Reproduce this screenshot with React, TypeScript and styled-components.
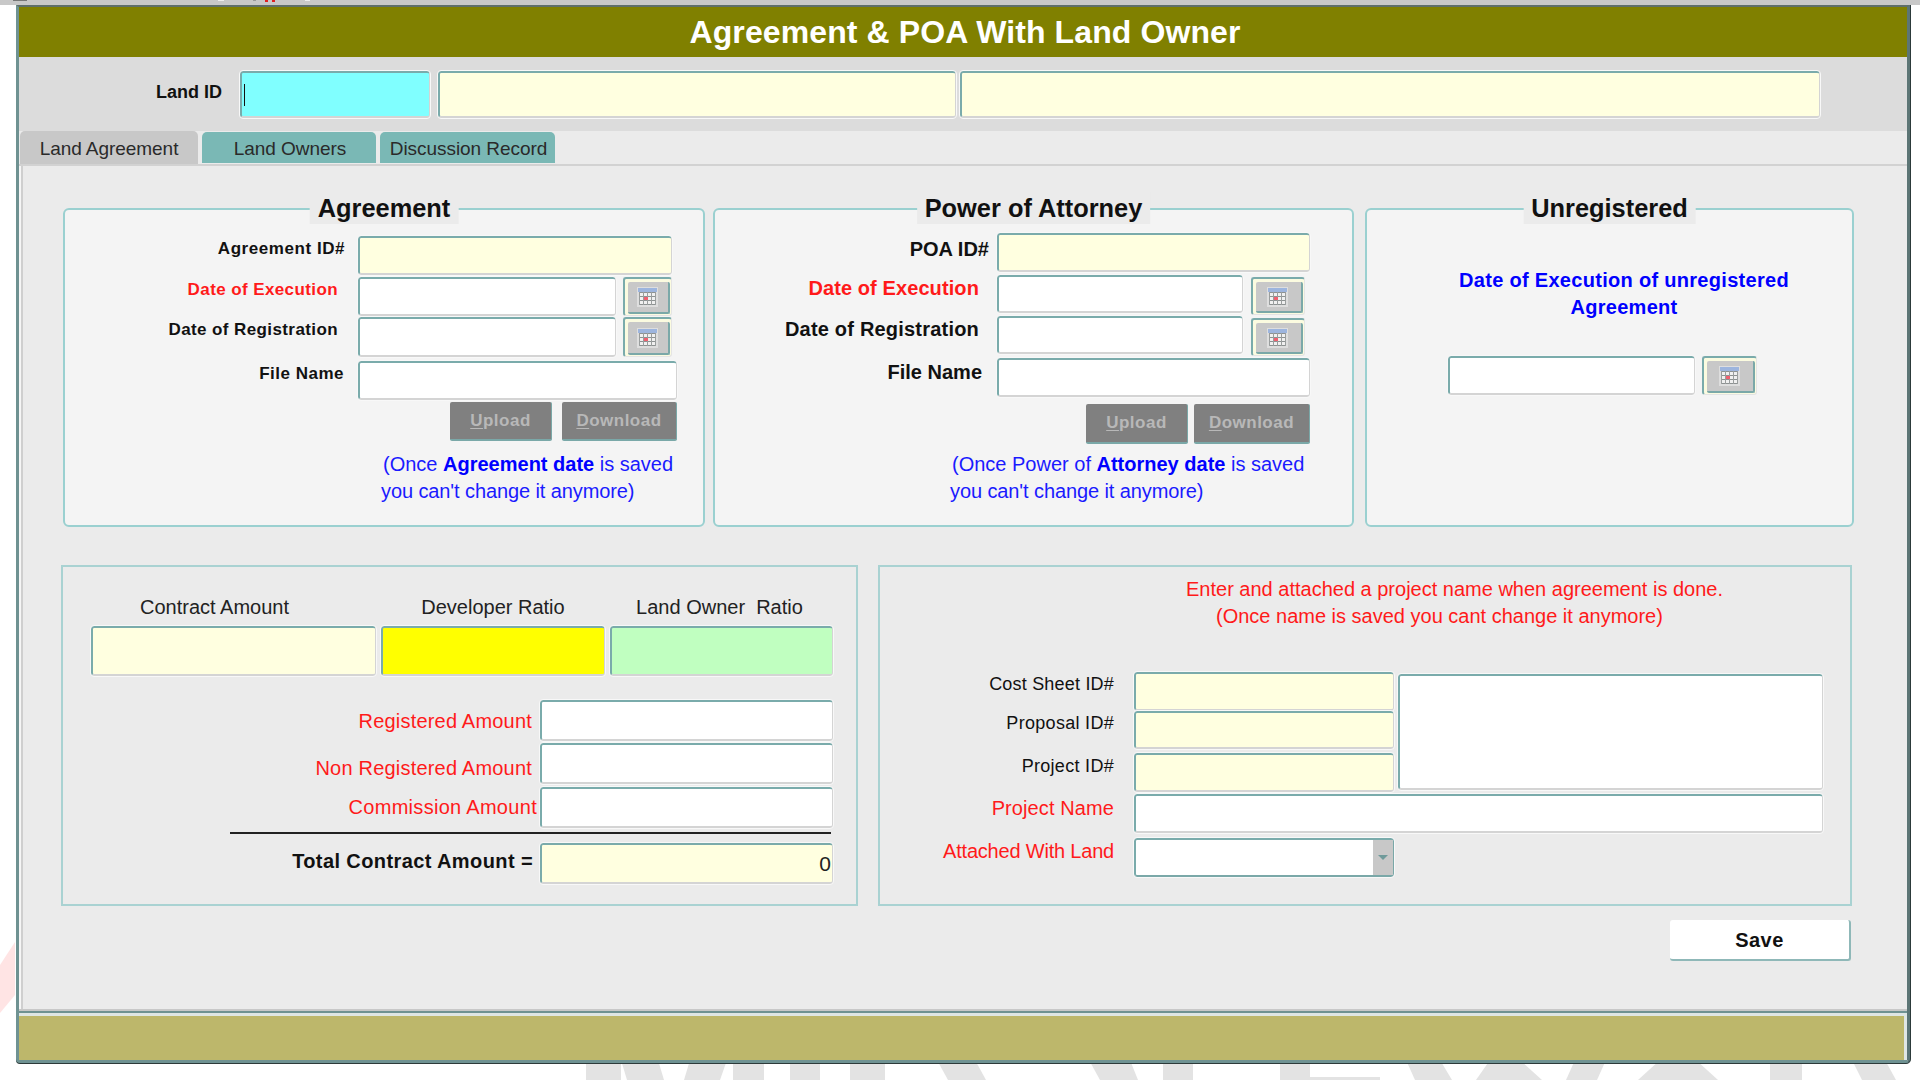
import React from "react";
import styled, { createGlobalStyle } from "styled-components";

const Global = createGlobalStyle`
  html, body { margin: 0; padding: 0; background: #fff; }
  body { width: 1920px; height: 1080px; overflow: hidden; font-family: "Liberation Sans", Arial, sans-serif; color: #111; }
  * { box-sizing: border-box; }
`;

const Page = styled.div`position: relative; width: 1920px; height: 1080px; overflow: hidden;`;
const Backdrop = styled.svg`position: absolute; left: 0; top: 0; width: 1920px; height: 1080px;`;
const TopStrip = styled.svg`position: relative; display: block; width: 1920px; height: 5px; background: #c8c8c8;`;

const Win = styled.div`
  position: relative; display: flex; flex-direction: column;
  margin-left: 16px; width: 1894px; height: 1058px;
  border-top: 2px solid #5f6f6a; border-left: 3px solid #6f9292; border-right: 3px solid #5c7575;
  border-bottom: 3px solid #6f9292; border-bottom-left-radius: 4px; border-bottom-right-radius: 4px;
  box-shadow: 0 1px 0 #2c3a3a, 1px 0 0 #2c3a3a; background: #ebebeb;
`;
const TitleBar = styled.div`
  height: 50px; line-height: 50px; padding-left: 4px; background: #808000; color: #fff; text-align: center;
  font-size: 32px; font-weight: 700; letter-spacing: 0.1px;
`;
const LandBar = styled.div`display: flex; align-items: flex-start; gap: 8px; height: 74px; padding-top: 14px; background: #dcdcdc;`;
const LandLabel = styled.div`width: 213px; padding: 9px 10px 0 0; text-align: right; font-size: 18px; line-height: 24px; font-weight: 700;`;
const TabBar = styled.div`display: flex; align-items: flex-start; gap: 4px; height: 35px; padding-left: 1px; border-bottom: 2px solid #d2d2d2; background: #ebebeb;`;
const Tab = styled.div<{ $active?: boolean; $w: number; $pl?: number }>`
  width: ${(p) => p.$w}px; height: ${(p) => (p.$active ? 33 : 31)}px; margin-top: ${(p) => (p.$active ? 0 : 1)}px;
  padding-left: ${(p) => p.$pl ?? 0}px;
  line-height: ${(p) => (p.$active ? 35 : 33)}px; text-align: center; font-size: 19px; color: #2a2a2a; letter-spacing: -0.05px;
  background: ${(p) => (p.$active ? "#c8c8c8" : "#7ab8b5")}; border-radius: 5px 5px 0 0;
`;

const Content = styled.div`
  flex: 1; padding: 42px 0 0 40px; background: #ebebeb;
  border-left: 2px solid #f6f6f6; box-shadow: inset 2px 0 0 #cfcfcf;
`;
const TopRow = styled.div`display: grid; grid-template-columns: 642px 641px 492px; column-gap: 8px; height: 319px; margin-left: 2px;`;
const Panel = styled.div<{ $inset?: number }>`
  position: relative; height: 319px; margin-left: ${(p) => p.$inset ?? 0}px;
  background: #f4f4f4; border: 2px solid #9ad0d0; border-radius: 6px;
`;
const PanelTitle = styled.div`
  position: absolute; top: -18px; left: 50%; transform: translateX(-50%); height: 32px; padding: 0 8px;
  background: #ebebeb; font-size: 25.4px; line-height: 32px; font-weight: 700; white-space: nowrap;
`;
const Row = styled.div<{ $top: number; $indent?: number }>`
  display: flex; align-items: flex-start; margin-top: ${(p) => p.$top}px; margin-left: ${(p) => p.$indent ?? 0}px;
`;
const Label = styled.div<{ $w: number; $pr: number; $pt?: number; $size?: number; $red?: boolean; $bold?: boolean; $sp?: number }>`
  width: ${(p) => p.$w}px; flex: none; padding-right: ${(p) => p.$pr}px; padding-top: ${(p) => p.$pt ?? 0}px;
  text-align: right; line-height: 24px; white-space: nowrap;
  font-size: ${(p) => p.$size ?? 20}px; font-weight: ${(p) => (p.$bold ? 700 : 400)};
  letter-spacing: ${(p) => p.$sp ?? 0}px; color: ${(p) => (p.$red ? "#ff1a1a" : "#111")};
`;
const Field = styled.div<{ $w: number; $h: number; $bg?: string; $nudge?: number }>`
  width: ${(p) => p.$w}px; height: ${(p) => p.$h}px; flex: none; background: ${(p) => p.$bg ?? "#fff"};
  margin-left: ${(p) => p.$nudge ?? 0}px;
  border-style: solid; border-width: 2px 1px 2px 2px; border-color: #7aabab #d4d4d4 #d4d4d4 #7aabab; border-radius: 3px;
  outline: 1px solid #f8f8f8; outline-offset: 0;
`;
const Caret = styled.div`width: 1px; height: 22px; margin: 11px 0 0 2px; background: #111;`;
const Amount = styled.div`text-align: right; padding-right: 1px; font-size: 21px; line-height: 38px; color: #222;`;
const CalOuter = styled.div<{ $w: number; $h: number; $left: number; $top?: number }>`
  width: ${(p) => p.$w}px; height: ${(p) => p.$h}px; flex: none; margin: ${(p) => p.$top ?? 0}px 0 0 ${(p) => p.$left}px;
  display: flex; padding: 3px 1px 1px 3px; background: #fbfbe0;
  border-style: solid; border-width: 2px 1px 1px 2px; border-color: #7aabab #e4e4e4 #e4e4e4 #7aabab; border-radius: 3px;
`;
const CalInner = styled.div`
  flex: 1; display: flex; align-items: center; justify-content: center; padding-right: 2px; background: #c8c8c8;
  border-right: 2px solid #7aa8a8; border-bottom: 2px solid #7aa8a8; border-radius: 2px;
`;
const Buttons = styled.div<{ $left: number; $gap: number; $top: number }>`
  display: flex; gap: ${(p) => p.$gap}px; margin: ${(p) => p.$top}px 0 0 ${(p) => p.$left}px;
`;
const GreyButton = styled.div<{ $w: number; $h: number }>`
  width: ${(p) => p.$w}px; height: ${(p) => p.$h}px; line-height: ${(p) => p.$h - 2}px; text-align: center;
  background: #808080; color: #b8b8b8; font-size: 17px; font-weight: 700; letter-spacing: 0.5px;
  border-right: 1px solid #7aa8a8; border-bottom: 2px solid #7aa8a8; border-radius: 2px;
  u { text-underline-offset: 2px; }
`;
const Note = styled.div<{ $left: number; $top: number }>`
  margin: ${(p) => p.$top}px 0 0 ${(p) => p.$left}px; font-size: 20px; line-height: 27px; color: #1a1aff; white-space: nowrap;
  b { color: #0000ff; }
`;
const NoteTail = styled.div`margin-left: -2px; letter-spacing: -0.1px;`;
const BlueHead = styled.div`
  margin-top: 57px; padding-left: 29px; text-align: center; font-size: 20px; line-height: 27px; font-weight: 700; color: #0000ff; letter-spacing: 0.3px;
`;

const BottomRow = styled.div`display: grid; grid-template-columns: 797px 974px; column-gap: 20px; height: 341px; margin-top: 38px;`;
const FlatPanel = styled.div`background: #ebebeb; border: 2px solid #a9d2d2; height: 341px;`;
const RatioHead = styled.div`display: grid; grid-template-columns: 285px 224px 223px; column-gap: 5px; margin: 28px 0 0 28px;`;
const RatioLabel = styled.div<{ $pr?: number }>`
  text-align: center; font-size: 20px; line-height: 24px; padding-right: ${(p) => p.$pr ?? 0}px; color: #222;
`;
const RatioInputs = styled.div`display: flex; gap: 5px; margin: 7px 0 0 28px;`;
const Rule = styled.div`width: 601px; height: 2px; margin: 4px 0 0 167px; background: #222;`;
const RedNote = styled.div<{ $left: number; $top?: number }>`
  margin: ${(p) => p.$top ?? 0}px 0 0 ${(p) => p.$left}px; font-size: 20px; line-height: 27px; color: #ff1a1a; white-space: nowrap;
`;
const FormTop = styled.div`display: flex; align-items: flex-start; margin-top: 42px;`;
const FormCol = styled.div`display: flex; flex-direction: column; width: 514px; flex: none;`;
const Area = styled(Field)`margin: 2px 0 0 4px;`;
const SelectBox = styled(Field)`display: flex; justify-content: flex-end; border-right-color: #7aa8a8; border-bottom-color: #7aa8a8;`;
const SelectArrow = styled.div`
  width: 20px; display: flex; align-items: center; justify-content: center; background: #c8c8c8;
  &::after { content: ""; border-left: 5px solid transparent; border-right: 5px solid transparent; border-top: 5px solid #6f9a9a; }
`;
const SaveRow = styled.div`display: flex; justify-content: flex-end; width: 1790px; margin-top: 14px;`;
const SaveButton = styled.div`
  width: 181px; height: 41px; line-height: 40px; text-align: center; background: #fff; font-size: 20px; font-weight: 700; letter-spacing: 0.5px;
  border-right: 2px solid #8fb8b8; border-bottom: 2px solid #8fb8b8; border-radius: 3px;
`;
const SeamLine = styled.div`height: 7px; border-top: 2px solid #c8c8c8; border-bottom: 3px solid #dfe6e4; background: #6f9292;`;
const FooterWrap = styled.div`height: 44px; padding-right: 3px; background: #dfe6e4;`;
const Footer = styled.div`height: 44px; background: #bdb76b;`;

const CalIcon = () => (
  <svg width="21" height="20" viewBox="0 0 21 20">
    <rect width="21" height="20" fill="#dedede" />
    <rect x="1" y="1" width="19" height="4" fill="#9db5de" />
    <rect x="2" y="5" width="17" height="13" fill="#f0f0f0" />
    {[5, 9, 13, 17].map((y) => (<rect key={y} x="2" y={y} width="17" height="1" fill="#8d9292" />))}
    {[2, 6, 10, 14, 18].map((x) => (<rect key={x} x={x} y="5" width="1" height="13" fill="#9a9e9e" />))}
    <rect x="7" y="10" width="4" height="3" fill="#f06070" />
  </svg>
);
const Cal = (p: { w: number; h: number; left: number; top?: number }) => (
  <CalOuter $w={p.w} $h={p.h} $left={p.left} $top={p.top}><CalInner><CalIcon /></CalInner></CalOuter>
);

const Y = "#ffffe0";

export default function App() {
  return (
    <Page>
      <Global />
      <Backdrop viewBox="0 0 1920 1080">
        <polygon points="15,942 0,965 0,1013 15,995" fill="#ffe4e4" />
        <g fill="#e3e3e3">
          <rect x="586" y="1060" width="35" height="20" />
          <polygon points="621,1060 658,1060 664,1080 627,1080" />
          <polygon points="690,1060 727,1060 720,1080 684,1080" />
          <rect x="733" y="1060" width="31" height="20" />
          <rect x="790" y="1060" width="30" height="20" />
          <rect x="850" y="1060" width="35" height="20" />
          <polygon points="937,1060 975,1060 986,1080 948,1080" />
          <polygon points="1089,1060 1130,1060 1138,1080 1100,1080" />
          <rect x="1163" y="1060" width="30" height="20" />
          <rect x="1280" y="1060" width="30" height="20" />
          <rect x="1310" y="1077" width="70" height="3" />
          <polygon points="1406,1060 1440,1060 1452,1080 1415,1080" />
          <polygon points="1490,1060 1520,1060 1542,1080 1476,1080" />
          <polygon points="1575,1060 1606,1060 1597,1080 1566,1080" />
          <polygon points="1660,1060 1696,1060 1718,1080 1638,1080" />
          <rect x="1770" y="1060" width="32" height="20" />
          <polygon points="1852,1060 1885,1060 1896,1080 1862,1080" />
        </g>
      </Backdrop>
      <TopStrip viewBox="0 0 1920 5">
        <rect x="13" y="0" width="14" height="1" fill="#777" />
        <rect x="218" y="0" width="6" height="1" fill="#eee" />
        <rect x="253" y="0" width="3" height="1" fill="#999" />
        <rect x="265" y="0" width="3" height="2" fill="#e02020" />
        <rect x="272" y="0" width="3" height="2" fill="#e02020" />
        <rect x="305" y="0" width="5" height="1" fill="#eee" />
      </TopStrip>
      <Win>
        <TitleBar>Agreement &amp; POA With Land Owner</TitleBar>
        <LandBar>
          <LandLabel>Land ID</LandLabel>
          <Field $w={190} $h={47} $bg="#80ffff"><Caret /></Field>
          <Field $w={518} $h={47} $bg={Y} />
          <Field $w={860} $h={47} $bg={Y} $nudge={-4} />
        </LandBar>
        <TabBar>
          <Tab $active $w={178}>Land Agreement</Tab>
          <Tab $w={174} $pl={2}>Land Owners</Tab>
          <Tab $w={175} $pl={2}>Discussion Record</Tab>
        </TabBar>
        <Content>
          <TopRow>
            <Panel>
              <PanelTitle>Agreement</PanelTitle>
              <Row $top={26}>
                <Label $w={293} $pr={13} $pt={1} $size={17} $bold $sp={0.55}>Agreement ID#</Label>
                <Field $w={314} $h={39} $bg={Y} />
              </Row>
              <Row $top={2}>
                <Label $w={293} $pr={20} $pt={1} $size={17} $bold $red $sp={0.4}>Date of Execution</Label>
                <Field $w={258} $h={39} />
                <Cal w={49} h={39} left={7} />
              </Row>
              <Row $top={1}>
                <Label $w={293} $pr={20} $pt={1} $size={17} $bold $sp={0.4}>Date of Registration</Label>
                <Field $w={258} $h={40} />
                <Cal w={49} h={40} left={7} />
              </Row>
              <Row $top={4}>
                <Label $w={293} $pr={14} $pt={1} $size={17} $bold $sp={0.5}>File Name</Label>
                <Field $w={319} $h={39} />
              </Row>
              <Buttons $left={385} $gap={10} $top={2}>
                <GreyButton $w={102} $h={39}><u>U</u>pload</GreyButton>
                <GreyButton $w={115} $h={39}><u>D</u>ownload</GreyButton>
              </Buttons>
              <Note $left={318} $top={10}>
                (Once <b>Agreement date</b> is saved
                <NoteTail>you can't change it anymore)</NoteTail>
              </Note>
            </Panel>
            <Panel>
              <PanelTitle>Power of Attorney</PanelTitle>
              <Row $top={23}>
                <Label $w={282} $pr={8} $pt={4} $bold>POA ID#</Label>
                <Field $w={313} $h={39} $bg={Y} />
              </Row>
              <Row $top={3}>
                <Label $w={282} $pr={18} $pt={1} $bold $red $sp={0.1}>Date of Execution</Label>
                <Field $w={246} $h={38} />
                <Cal w={54} h={38} left={8} top={2} />
              </Row>
              <Row $top={1}>
                <Label $w={282} $pr={18} $pt={1} $bold $sp={0.2}>Date of Registration</Label>
                <Field $w={246} $h={38} />
                <Cal w={54} h={38} left={8} top={2} />
              </Row>
              <Row $top={2}>
                <Label $w={282} $pr={15} $pt={2} $bold>File Name</Label>
                <Field $w={313} $h={39} />
              </Row>
              <Buttons $left={371} $gap={6} $top={7}>
                <GreyButton $w={102} $h={40}><u>U</u>pload</GreyButton>
                <GreyButton $w={116} $h={40}><u>D</u>ownload</GreyButton>
              </Buttons>
              <Note $left={237} $top={7}>
                (Once Power of <b>Attorney date</b> is saved
                <NoteTail>you can't change it anymore)</NoteTail>
              </Note>
            </Panel>
            <Panel $inset={3}>
              <PanelTitle>Unregistered</PanelTitle>
              <BlueHead>Date of Execution of unregistered<br />Agreement</BlueHead>
              <Row $top={35} $indent={81}>
                <Field $w={247} $h={39} />
                <Cal w={55} h={39} left={7} />
              </Row>
            </Panel>
          </TopRow>
          <BottomRow>
            <FlatPanel>
              <RatioHead>
                <RatioLabel $pr={38}>Contract Amount</RatioLabel>
                <RatioLabel>Developer Ratio</RatioLabel>
                <RatioLabel $pr={4}>Land Owner&nbsp; Ratio</RatioLabel>
              </RatioHead>
              <RatioInputs>
                <Field $w={285} $h={50} $bg={Y} />
                <Field $w={224} $h={50} $bg="#ffff00" />
                <Field $w={223} $h={50} $bg="#c0ffc0" />
              </RatioInputs>
              <Row $top={24}>
                <Label $w={477} $pr={8} $pt={9} $red $sp={0.2}>Registered Amount</Label>
                <Field $w={293} $h={41} />
              </Row>
              <Row $top={2}>
                <Label $w={477} $pr={8} $pt={13} $red $sp={0.2}>Non Registered Amount</Label>
                <Field $w={293} $h={41} />
              </Row>
              <Row $top={3}>
                <Label $w={477} $pr={3} $pt={8} $red $sp={0.3}>Commission Amount</Label>
                <Field $w={293} $h={41} />
              </Row>
              <Rule />
              <Row $top={9}>
                <Label $w={477} $pr={7} $pt={6} $bold $sp={0.4}>Total Contract Amount =</Label>
                <Field $w={293} $h={41} $bg={Y}><Amount>0</Amount></Field>
              </Row>
            </FlatPanel>
            <FlatPanel>
              <RedNote $left={306} $top={9}>Enter and attached a project name when agreement is done.</RedNote>
              <RedNote $left={336}>(Once name is saved you cant change it anymore)</RedNote>
              <FormTop>
                <FormCol>
                  <Row $top={0}>
                    <Label $w={254} $pr={20} $size={18} $sp={0.2}>Cost Sheet ID#</Label>
                    <Field $w={260} $h={39} $bg={Y} />
                  </Row>
                  <Row $top={0}>
                    <Label $w={254} $pr={20} $size={18} $sp={0.3}>Proposal ID#</Label>
                    <Field $w={260} $h={38} $bg={Y} />
                  </Row>
                  <Row $top={4}>
                    <Label $w={254} $pr={20} $pt={1} $size={18} $sp={0.3}>Project ID#</Label>
                    <Field $w={260} $h={39} $bg={Y} />
                  </Row>
                </FormCol>
                <Area $w={425} $h={116} />
              </FormTop>
              <Row $top={2}>
                <Label $w={254} $pr={20} $pt={2} $red $sp={0.1}>Project Name</Label>
                <Field $w={689} $h={39} />
              </Row>
              <Row $top={5}>
                <Label $w={254} $pr={20} $pt={1} $red $sp={-0.2}>Attached With Land</Label>
                <SelectBox $w={260} $h={39}><SelectArrow /></SelectBox>
              </Row>
            </FlatPanel>
          </BottomRow>
          <SaveRow><SaveButton>Save</SaveButton></SaveRow>
        </Content>
        <SeamLine />
        <FooterWrap><Footer /></FooterWrap>
      </Win>
    </Page>
  );
}
